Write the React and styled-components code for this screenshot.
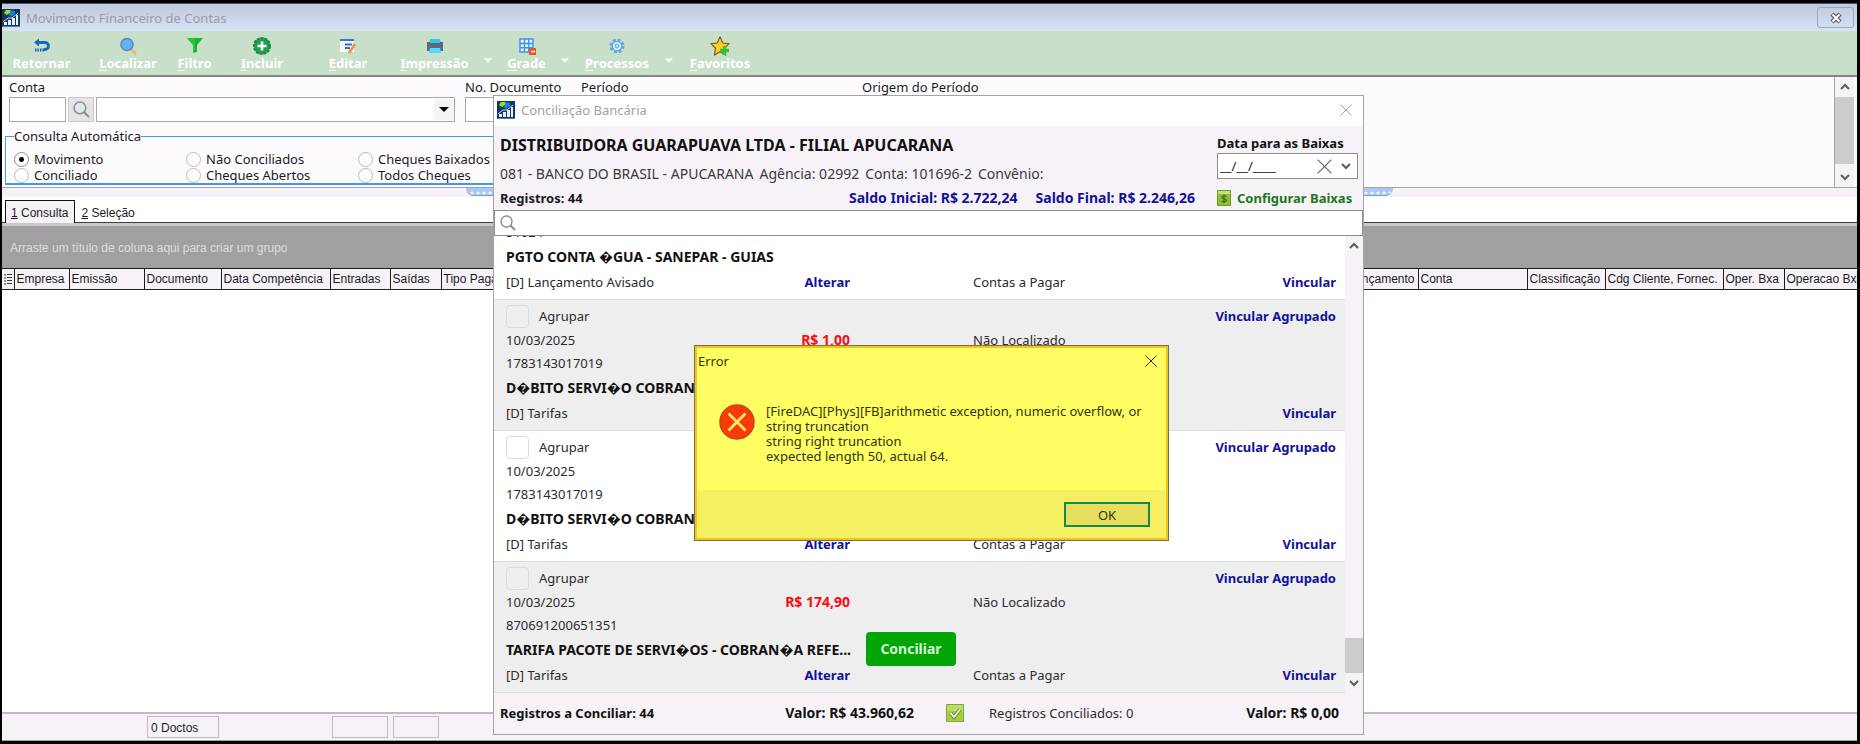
import React from "react";
import styled, { createGlobalStyle } from "styled-components";

const GlobalStyle = createGlobalStyle`
  *, *::before, *::after {
    box-sizing: border-box;
  }

  body {
    margin: 0;
    background: #000;
    color: #1c1a1e;
    font-family: "Noto Sans", "Open Sans", sans-serif;
    font-size: 13px;
    line-height: 16px;
  }

  button, input, select {
    font: inherit;
    color: inherit;
    margin: 0;
    padding: 0;
    border-radius: 0;
  }

  button {
    background: none;
    border: 0;
  }

  h1, h2, p {
    margin: 0;
    font-size: inherit;
    font-weight: inherit;
  }
`;

const Screen = styled.div`
  position: relative;
  display: flex;
  flex-direction: column;
  min-height: 100vh;
  border: solid #000;
  border-width: 3px 3px 3px 2px;
  background: #fff;
  overflow: hidden;
`;

const TitleBar = styled.header`
  display: flex;
  align-items: center;
  height: 28px;
  padding-right: 3px;
  background: linear-gradient(#c0cbdc, #c8d4e5 45%, #d6e4f7);
  border-top: 1px solid #3c5a8a;
  color: #9c9ca4;

  & h1 {
    flex: 1;
    margin-left: 6px;
  }
`;

const CaptionButton = styled.button`
  display: flex;
  align-items: center;
  justify-content: center;
  width: 37px;
  height: 21px;
  border: 1px solid #98a5bd;
  border-radius: 3px;
`;

const Toolbar = styled.nav`
  display: flex;
  height: 46px;
  background: #c8dfc9;
  border-bottom: 2px solid #828583;
`;

const ToolButton = styled.button`
  display: flex;
  flex-direction: column;
  align-items: center;
  width: ${(props) => props.$width}px;
  padding-top: 5px;
  color: #fff;
  font-weight: 700;
  line-height: 14px;
  white-space: nowrap;

  & u {
    text-underline-offset: 2px;
  }
`;

const ToolArrow = styled.button`
  display: flex;
  align-items: center;
  justify-content: center;
  width: 10px;
  padding-bottom: 12px;
  align-self: flex-end;
`;

const FilterPanel = styled.section`
  display: flex;
  height: 111px;
  padding-right: 3px;
  background: #fefbff;
  border-bottom: 1px solid #a5a3a6;
`;

const FilterBody = styled.div`
  flex: 1;
  min-width: 0;
  padding: 3px 3px 0;
`;

const FilterRow = styled.div`
  display: flex;
  padding-left: 4px;
`;

const Field = styled.div`
  display: flex;
  flex-direction: column;
  gap: 3px;
  width: ${(props) => props.$width}px;

  & label {
    line-height: 14px;
    white-space: nowrap;
  }
`;

const FieldLine = styled.div`
  display: flex;
  gap: 2px;
  height: 25px;
  padding-right: 10px;
`;

const TextBox = styled.input`
  width: ${(props) => props.$width}px;
  height: 25px;
  padding: 0 4px;
  border: 1px solid #a9a8ab;
  background: #fff;
`;

const LookupButton = styled.button`
  display: flex;
  align-items: center;
  justify-content: center;
  width: 26px;
  height: 25px;
  background: #e6e3e7;
  border: 1px solid #cbc9cc;
`;

const SelectBox = styled.div`
  display: flex;
  align-items: center;
  flex: 1;
  background: #fff;
  border: 1px solid #a9a8ab;

  & select {
    flex: 1;
    height: 23px;
    padding: 0 4px;
    border: 0;
    background: transparent;
    appearance: none;
  }

  & span {
    display: flex;
    align-items: center;
    justify-content: center;
    width: 20px;
    height: 21px;
    background: #f6f3f7;
  }
`;

const QueryGroup = styled.fieldset`
  display: grid;
  grid-template-columns: repeat(3, 172px);
  grid-auto-rows: 16px;
  width: 640px;
  margin: 7px 0 0;
  padding: 8px 0 0 8px;
  border: 1px solid #3d9bea;
  border-bottom-width: 2px;

  & legend {
    line-height: 14px;
    padding: 0;
  }
`;

const RadioLabel = styled.label`
  display: flex;
  align-items: center;
  gap: 5px;

  & input {
    appearance: none;
    width: 15px;
    height: 15px;
    border: 1px solid #b9b7ba;
    border-radius: 50%;
    background: #fff;
  }

  & input:checked {
    border-color: #8e8c8f;
    background: radial-gradient(circle, #000 0 2px, #fff 3px);
  }
`;

const Scrollbar = styled.div`
  display: flex;
  flex-direction: column;
  align-items: center;
  width: ${(props) => props.$width}px;
  background: #f6f2f7;
  border-left: ${(props) => (props.$edge ? "1px solid #a5a3a6" : "0")};

  & button {
    display: flex;
    align-items: center;
    justify-content: center;
    width: 100%;
    height: 20px;
  }
`;

const Track = styled.div`
  display: flex;
  flex: 1;
  align-items: ${(props) => props.$thumbAt};
  width: 100%;
`;

const Thumb = styled.div`
  width: 100%;
  height: ${(props) => props.$size}px;
  background: #cdcbce;
`;

const Splitter = styled.div`
  display: flex;
  justify-content: center;
  height: 9px;
  background: #f6f2f7;
`;

const Grip = styled.button`
  width: 50%;
  height: 8px;
  background: radial-gradient(circle at 2px 5px, #eef6ff 1px, transparent 2px) 4px 0 / 6px 8px repeat-x,
    #a9c9f2;
  border-bottom: 1px solid #7f9cc4;
  border-radius: 0 0 8px 8px;
`;

const gridFont = `font-family: "Liberation Sans", Arial, sans-serif; font-size: 12px;`;

const Tabs = styled.div`
  display: flex;
  align-items: flex-end;
  height: 29px;
  padding-left: 3px;
  border-bottom: 3px solid #c9c7ca;
  box-shadow: inset 0 -1px 0 #3e3c40;
`;

const Tab = styled.button`
  height: 23px;
  padding: 1px 6px 0 5px;
  ${gridFont}
  border: solid ${(props) => (props.$active ? "#111" : "transparent")};
  border-width: 1px 1px 0;
  background: ${(props) => (props.$active ? "#f6f2f7" : "transparent")};
`;

const GroupBar = styled.p`
  height: 42px;
  padding: 14px 8px 0;
  background: #a29fa2;
  color: #dedcdf;
  ${gridFont}
`;

const Grid = styled.table`
  width: 100%;
  table-layout: fixed;
  border-collapse: collapse;
  ${gridFont}

  & th {
    height: 21px;
    padding: 0 2px;
    overflow: hidden;
    background: #f6f2f7;
    border: solid #1c1a1e;
    border-width: 1px 1px 1px 0;
    font-weight: 400;
    text-align: left;
    white-space: nowrap;
  }

  & th:last-child {
    border-right: 0;
  }

  & svg {
    display: block;
  }
`;

const Column = styled.col`
  width: ${(props) => (props.$width ? `${props.$width}px` : "auto")};
`;

const GridArea = styled.main`
  flex: 1;
`;

const StatusBar = styled.footer`
  display: flex;
  align-items: center;
  height: 29px;
  padding-left: 145px;
  background: #f6f2f7;
  border-top: 2px solid #bdbbbe;
  border-bottom: 1px solid #a5a3a6;
`;

const StatusCell = styled.div`
  width: ${(props) => props.$width}px;
  height: 22px;
  margin-right: ${(props) => props.$after}px;
  padding: 3px 3px 0;
  border: 1px solid #bdbbbe;
  ${gridFont}
`;

const Overlay = styled.div`
  position: absolute;
  inset: 0;
  display: flex;
  justify-content: center;
  align-items: flex-start;
  padding: ${(props) => props.$pad};
`;

const Dialog = styled.section`
  width: 871px;
  background: #f6f2f7;
  border: 1px solid #a5a3a6;
`;

const DialogTitle = styled.div`
  display: flex;
  align-items: center;
  gap: 6px;
  height: 30px;
  padding: 0 11px 2px 3px;
  background: #fff;
  color: #a3a1a4;

  & h2 {
    flex: 1;
  }

  & button {
    display: flex;
  }
`;

const DialogHeader = styled.div`
  display: flex;
  gap: 22px;
  height: 84px;
  padding: 9px 5px 0 6px;
`;

const Account = styled.div`
  flex: 1;
  white-space: nowrap;

  & h2 {
    color: #111;
    font-size: 16px;
    font-weight: 700;
    line-height: 20px;
  }

  & p {
    display: flex;
    gap: 6px;
    margin-top: 9px;
    color: #3b393d;
    font-size: 14px;
    line-height: 20px;
  }
`;

const Balances = styled.div`
  display: flex;
  gap: 18px;
  margin-top: 4px;
  line-height: 20px;

  & strong:first-child {
    flex: 1;
  }
`;

const Balance = styled.strong`
  color: #12129a;
  font-size: 14px;
`;

const Writeoff = styled.div`
  display: flex;
  flex-direction: column;
  width: 141px;

  & label {
    color: #111;
    font-weight: 700;
  }
`;

const DateBox = styled.div`
  display: flex;
  align-items: center;
  gap: 9px;
  height: 26px;
  margin-top: 2px;
  padding: 0 6px 0 2px;
  background: #fff;
  border: 1px solid #8e8c8f;

  & input {
    flex: 1;
    min-width: 0;
    border: 0;
  }

  & button {
    display: flex;
  }
`;

const ConfigLink = styled.a`
  display: flex;
  align-items: center;
  gap: 6px;
  margin-top: 9px;
  color: #1a7a1a;
  font-weight: 700;
  line-height: 20px;
  text-decoration: none;
  white-space: nowrap;
`;

const SearchBox = styled.label`
  display: flex;
  align-items: center;
  gap: 6px;
  height: 26px;
  padding: 0 5px;
  background: #fff;
  border: 1px solid #8e8c8f;

  & input {
    flex: 1;
    border: 0;
    outline: 0;
  }
`;

const ListFrame = styled.div`
  display: flex;
  height: 457px;
`;

/* kept at the end of its scroll, so the first entry is cut at the top */
const List = styled.ul`
  display: flex;
  flex: 1;
  flex-direction: column;
  justify-content: flex-end;
  margin: 0;
  padding: 0;
  overflow: hidden;
  list-style: none;
`;

const Entry = styled.li`
  display: grid;
  flex: none;
  grid-template-columns: 254px 90px 16px 90px 17px 1fr auto;
  grid-template-rows: 24px 23px 24px 25px 25px;
  align-items: center;
  height: 131px;
  padding: 4px 9px 0 12px;
  border-bottom: 1px solid #dedee2;
  background: ${(props) => (props.$shaded ? "#eeeeee" : "#fff")};
  color: #2c2a2e;
  white-space: nowrap;
`;

const GroupCheck = styled.label`
  display: flex;
  grid-column: 1;
  grid-row: 1;
  align-items: center;
  gap: 10px;

  & input {
    appearance: none;
    width: 23px;
    height: 23px;
    margin: 0;
    border: 1px solid #d9dae3;
    border-radius: 4px;
  }
`;

const Cell = styled.span`
  grid-column: ${(props) => props.$col};
  grid-row: ${(props) => props.$row};
`;

const Amount = styled(Cell)`
  color: #fb0b14;
  font-size: 14px;
  font-weight: 700;
  text-align: right;
`;

const Description = styled.strong`
  grid-column: 1 / 4;
  grid-row: 4;
  color: #111;
  font-size: 14px;
`;

const Action = styled.a`
  grid-column: ${(props) => props.$col};
  grid-row: ${(props) => props.$row};
  justify-self: end;
  color: #12129a;
  font-weight: 700;
  text-decoration: none;
`;

const ReconcileButton = styled.button`
  grid-column: 4;
  grid-row: 3 / 6;
  height: 34px;
  margin-bottom: 2px;
  background: #00a605;
  border-radius: 4px;
  color: #d8f5d8;
  font-size: 14px;
  font-weight: 700;
`;

const DialogFooter = styled.div`
  display: flex;
  align-items: center;
  height: 41px;
  padding: 2px 24px 3px 6px;
  color: #2c2a2e;

  & strong {
    color: #111;
  }
`;

const Pending = styled.strong`
  flex: 0 0 158px;
`;

const Total = styled.strong`
  width: ${(props) => props.$width}px;
  font-size: 14px;
  text-align: right;
`;

const DoneCount = styled.span`
  display: flex;
  flex: 1;
  align-items: center;
  gap: 25px;
  margin-left: 32px;
`;

const ErrorBox = styled.section`
  width: 475px;
  background: #ffff63;
  border: 1px solid #77704a;
  box-shadow: inset 0 0 0 2px #f3c51c;
  padding: 2px;
  color: #33330f;
`;

const ErrorTitle = styled.div`
  display: flex;
  align-items: center;
  justify-content: space-between;
  height: 26px;
  padding: 0 9px 0 1px;

  & button {
    display: flex;
  }
`;

const ErrorMessage = styled.div`
  display: flex;
  gap: 11px;
  height: 116px;
  padding: 30px 0 0 22px;

  & p {
    line-height: 15px;
    white-space: pre;
  }
`;

const ErrorActions = styled.div`
  display: flex;
  justify-content: flex-end;
  height: 48px;
  padding: 12px 16px 0 0;
  background: #f5ef62;

  & button {
    width: 86px;
    height: 25px;
    background: #e7de5e;
    border: 2px solid #118a55;
  }
`;

const AppIcon = () => (
  <svg width="18" height="18" viewBox="0 0 18 18" aria-hidden="true">
    <rect width="18" height="18" fill="#12395f" />
    <path d="M2 4l2-3h5L8 4 5 6z" fill="#9be020" />
    <path d="M8 1l5 1v3L9 8 7 6 8 4z" fill="#1a7fe0" />
    <path d="M2 16v-3h3v3zM6 16v-5h3v5zM10 16V9h3v7zM14 16V6h2v10z" fill="#eaf2fb" />
    <path d="M1 13l5-4 4 0 6-5" stroke="#c9dcf0" fill="none" />
    <path d="M0 17.500h18" stroke="#4d7fa8" />
  </svg>
);

const Cross = ({ size = 12, color = "#a9a7aa", width = 1 }) => (
  <svg width={size} height={size} viewBox="0 0 12 12" aria-hidden="true">
    <path d="M.5.5l11 11M11.500.5l-11 11" stroke={color} strokeWidth={width} />
  </svg>
);

const Chevron = ({ up }) => (
  <svg width="10" height="8" viewBox="0 0 10 8" aria-hidden="true">
    <path d={up ? "M1 6l4-4 4 4" : "M1 2l4 4 4-4"} stroke="#5c5a5d" strokeWidth="2" fill="none" />
  </svg>
);

const Lens = ({ size = 16, fill = "none" }) => (
  <svg width={size} height={size} viewBox="0 0 16 16" aria-hidden="true">
    <path d="M10.500 10.500l4.500 4.500" stroke="#8f8d90" strokeWidth="2" />
    <circle cx="6.500" cy="6.500" r="5.500" fill={fill} stroke="#8f8d90" strokeWidth="1.400" />
  </svg>
);

const RowsIcon = () => (
  <svg width="8" height="12" viewBox="0 0 8 12" aria-hidden="true">
    <path d="M0 2h2M0 5h2M0 8h2M0 11h2M3 1.500h5M3 4.500h5M3 7.500h5M3 10.500h5" stroke="#3e3c40" />
  </svg>
);

const ToolIcon = ({ children }) => (
  <svg width="20" height="20" viewBox="0 0 20 20" aria-hidden="true">
    {children}
  </svg>
);

const icons = {
  back: (
    <ToolIcon>
      <path d="M4 6.500h9a3 3 0 010 7h-1" stroke="#1767c4" strokeWidth="2.800" fill="none" />
      <path d="M7 2.500v8L2 6.500z" fill="#1767c4" />
      <path d="M3 14h9" stroke="#1767c4" strokeWidth="3" strokeDasharray="1.500 1" />
    </ToolIcon>
  ),
  find: (
    <ToolIcon>
      <path d="M13 13l5 5" stroke="#e5ba6a" strokeWidth="2.500" />
      <circle cx="9" cy="8.500" r="6" fill="#62b2fb" stroke="#5d86b4" strokeWidth="1.500" />
    </ToolIcon>
  ),
  filter: (
    <ToolIcon>
      <path d="M2 2h16l-6 7v7l-4 1V9z" fill="#17b42c" />
      <path d="M2 2h8v15l-2-1V9z" fill="#35d83f" opacity=".5" />
    </ToolIcon>
  ),
  add: (
    <ToolIcon>
      <circle cx="10" cy="10" r="8" fill="#20a04d" stroke="#128a45" strokeWidth="2" strokeDasharray="3 1" />
      <path d="M10 5.500v9M5.500 10h9" stroke="#fff" strokeWidth="2.600" />
    </ToolIcon>
  ),
  edit: (
    <ToolIcon>
      <path d="M2 3h14v13H2z" fill="#f4f8ff" />
      <path d="M2 3h14v2H2z" fill="#3d74d0" />
      <path d="M7 8.500h7M7 12h5" stroke="#2a6be0" strokeWidth="1.800" />
      <path d="M11 17l6-9" stroke="#f0933a" strokeWidth="2.800" />
    </ToolIcon>
  ),
  print: (
    <ToolIcon>
      <path d="M5 3h10v5H5z" fill="#33c6ef" />
      <path d="M2 6h2l1-1v2h10V5l1 1h2v9H2z" fill="#5b6b77" />
      <path d="M5 12h10l1 5H4z" fill="#4fdcff" />
    </ToolIcon>
  ),
  grid: (
    <ToolIcon>
      <path d="M3 3h13v13H3z" fill="#e4f1ff" />
      <path d="M3 3h13v13H3zM3 7.500h13M3 11.700h13M7.500 3v13M11.700 3v13" stroke="#3b94e8" strokeWidth="1.400" fill="none" />
      <path d="M12 12h7v7h-7z" fill="#e8542a" />
      <path d="M14 15.500h4" stroke="#fff" strokeWidth="1.500" />
    </ToolIcon>
  ),
  gear: (
    <ToolIcon>
      <circle cx="10" cy="10" r="6" fill="none" stroke="#5aa6e8" strokeWidth="3" strokeDasharray="2.700 2.010" />
      <circle cx="10" cy="10" r="4.700" fill="#e6f3fd" stroke="#5aa6e8" strokeWidth="1.200" />
      <circle cx="10" cy="10" r="2" fill="#c8dfc9" stroke="#5aa6e8" />
    </ToolIcon>
  ),
  star: (
    <ToolIcon>
      <path d="M10 1l2.800 6 6.200.700-4.600 4.500L15.500 19 10 15.700 4.500 19l1.100-6.800L1 7.700 7.200 7z" fill="#ffd02a" stroke="#8a5a10" strokeWidth="1.200" />
      <path d="M14.500 10v9M10 14.500h9" stroke="#37c12f" strokeWidth="3.400" />
    </ToolIcon>
  ),
};

const TriangleDown = ({ color, width = 10 }) => (
  <svg width={width} height="5" viewBox="0 0 10 5" aria-hidden="true">
    <path d="M0 0h10L5 5z" fill={color} />
  </svg>
);

const MoneyIcon = () => (
  <svg width="14" height="16" viewBox="0 0 14 16" aria-hidden="true">
    <path d="M.5.5h13v15H.5z" fill="#8fbf35" stroke="#6d9a2a" />
    <path d="M1 1h12v3H1z" fill="#c5df7d" />
    <path d="M9.500 6.500C8 5.300 4.700 5.500 4.700 7.300c0 2 4.800 1 4.800 3 0 1.800-3.500 2-5 .700M7 4.500v8.500" stroke="#3f6d12" strokeWidth="1.200" fill="none" />
  </svg>
);

const CheckIcon = () => (
  <svg width="18" height="18" viewBox="0 0 18 18" aria-hidden="true">
    <path d="M.5.5h17v17H.5z" fill="#a5cf3f" stroke="#7fa63a" />
    <path d="M1 1h16v6H1z" fill="#bcdc68" />
    <path d="M4.500 9l3.500 4 6-7.500" stroke="#5f7d38" strokeWidth="3.600" fill="none" />
    <path d="M4.500 9l3.500 4 6-7.500" stroke="#edf3e2" strokeWidth="2" fill="none" />
  </svg>
);

const ErrorIcon = () => (
  <svg width="36" height="36" viewBox="0 0 36 36" aria-hidden="true">
    <circle cx="18" cy="18" r="17" fill="#fa3a08" stroke="#c9470c" strokeWidth="1.500" />
    <path d="M9.500 9.500l17 17M26.500 9.500l-17 17" stroke="#ffee66" strokeWidth="2.600" />
  </svg>
);

const tools = [
  { label: "Retornar", icon: "back", width: 79, plain: true },
  { label: "Localizar", icon: "find", width: 94 },
  { label: "Filtro", icon: "filter", width: 39 },
  { label: "Incluir", icon: "add", width: 96 },
  { label: "Editar", icon: "edit", width: 76 },
  { label: "Impressão", icon: "print", width: 97, menu: true },
  { label: "Grade", icon: "grid", width: 67, menu: true },
  { label: "Processos", icon: "gear", width: 94, menu: true },
  { label: "Favoritos", icon: "star", width: 92 },
];

const queries = [
  "Movimento",
  "Não Conciliados",
  "Cheques Baixados",
  "Conciliado",
  "Cheques Abertos",
  "Todos Cheques",
];

const columns = [
  { title: "", width: 12 },
  { title: "Empresa", width: 55 },
  { title: "Emissão", width: 75 },
  { title: "Documento", width: 77 },
  { title: "Data Competência", width: 109 },
  { title: "Entradas", width: 60 },
  { title: "Saídas", width: 51 },
  { title: "Tipo Pagamento" },
  { title: "Lançamento", width: 72 },
  { title: "Conta", width: 109 },
  { title: "Classificação", width: 78 },
  { title: "Cdg Cliente, Fornec.", width: 118 },
  { title: "Oper. Bxa", width: 61 },
  { title: "Operacao Bxa", width: 73 },
];

const entries = [
  {
    number: "51024",
    description: "PGTO CONTA \uFFFDGUA - SANEPAR - GUIAS",
    kind: "[D] Lançamento Avisado",
  },
  {
    date: "10/03/2025",
    number: "1783143017019",
    amount: "R$ 1,00",
    description: "D\uFFFDBITO SERVI\uFFFDO COBRAN\uFFFDA",
    kind: "[D] Tarifas",
  },
  {
    date: "10/03/2025",
    number: "1783143017019",
    description: "D\uFFFDBITO SERVI\uFFFDO COBRAN\uFFFDA",
    kind: "[D] Tarifas",
  },
  {
    date: "10/03/2025",
    number: "870691200651351",
    amount: "R$ 174,90",
    description: "TARIFA PACOTE DE SERVI\uFFFDOS - COBRAN\uFFFDA REFE...",
    kind: "[D] Tarifas",
    selected: true,
  },
];

const errorText = `[FireDAC][Phys][FB]arithmetic exception, numeric overflow, or
string truncation
string right truncation
expected length 50, actual 64.`;

const MainToolbar = () => (
  <Toolbar>
    {tools.map((tool) => (
      <React.Fragment key={tool.label}>
        <ToolButton $width={tool.width}>
          {icons[tool.icon]}
          <span>
            {tool.plain ? tool.label[0] : <u>{tool.label[0]}</u>}
            {tool.label.slice(1)}
          </span>
        </ToolButton>
        {tool.menu && (
          <ToolArrow aria-label={`Opções de ${tool.label}`}>
            <TriangleDown color="#fff" width={8} />
          </ToolArrow>
        )}
      </React.Fragment>
    ))}
  </Toolbar>
);

const Filters = () => (
  <FilterPanel>
    <FilterBody>
      <FilterRow>
        <Field $width={456}>
          <label htmlFor="conta">Conta</label>
          <FieldLine>
            <TextBox id="conta" $width={57} />
            <LookupButton aria-label="Pesquisar conta">
              <Lens size={17} fill="#dcebed" />
            </LookupButton>
            <SelectBox>
              <select aria-label="Nome da conta" />
              <span>
                <TriangleDown color="#000" />
              </span>
            </SelectBox>
          </FieldLine>
        </Field>
        <Field $width={116}>
          <label htmlFor="documento">No. Documento</label>
          <TextBox id="documento" $width={100} />
        </Field>
        <Field $width={281}>
          <label htmlFor="periodo">Período</label>
          <TextBox id="periodo" $width={120} />
        </Field>
        <Field $width={200}>
          <label htmlFor="origem">Origem do Período</label>
          <TextBox id="origem" $width={160} />
        </Field>
      </FilterRow>
      <QueryGroup>
        <legend>Consulta Automática</legend>
        {queries.map((query, index) => (
          <RadioLabel key={query}>
            <input type="radio" name="consulta" defaultChecked={index === 0} />
            {query}
          </RadioLabel>
        ))}
      </QueryGroup>
    </FilterBody>
    <Scrollbar $width={20} $edge>
      <button aria-label="Subir">
        <Chevron up />
      </button>
      <Track $thumbAt="flex-start">
        <Thumb $size={67} />
      </Track>
      <button aria-label="Descer">
        <Chevron />
      </button>
    </Scrollbar>
  </FilterPanel>
);

const BankEntry = ({ entry, shaded }) => (
  <Entry $shaded={shaded}>
    <GroupCheck>
      <input type="checkbox" />
      Agrupar
    </GroupCheck>
    <Action href="#agrupado" $col="6 / 8" $row={1}>
      Vincular Agrupado
    </Action>
    <Cell $col={1} $row={2}>
      {entry.date}
    </Cell>
    <Amount $col={2} $row={2}>
      {entry.amount}
    </Amount>
    <Cell $col="6 / 8" $row={2}>
      Não Localizado
    </Cell>
    <Cell $col={1} $row={3}>
      {entry.number}
    </Cell>
    <Description>{entry.description}</Description>
    {entry.selected && <ReconcileButton>Conciliar</ReconcileButton>}
    <Cell $col={1} $row={5}>
      {entry.kind}
    </Cell>
    <Action href="#alterar" $col={2} $row={5}>
      Alterar
    </Action>
    <Cell $col={6} $row={5}>
      Contas a Pagar
    </Cell>
    <Action href="#vincular" $col={7} $row={5}>
      Vincular
    </Action>
  </Entry>
);

const Reconciliation = () => (
  <Dialog role="dialog" aria-label="Conciliação Bancária">
    <DialogTitle>
      <AppIcon />
      <h2>Conciliação Bancária</h2>
      <button aria-label="Fechar">
        <Cross />
      </button>
    </DialogTitle>
    <DialogHeader>
      <Account>
        <h2>DISTRIBUIDORA GUARAPUAVA LTDA - FILIAL APUCARANA</h2>
        <p>
          <span>081 - BANCO DO BRASIL - APUCARANA</span>
          <span>Agência: 02992</span>
          <span>Conta: 101696-2</span>
          <span>Convênio:</span>
        </p>
        <Balances>
          <strong>Registros: 44</strong>
          <Balance>Saldo Inicial: R$ 2.722,24</Balance>
          <Balance>Saldo Final: R$ 2.246,26</Balance>
        </Balances>
      </Account>
      <Writeoff>
        <label htmlFor="data-baixas">Data para as Baixas</label>
        <DateBox>
          <input id="data-baixas" defaultValue="__/__/____" />
          <button aria-label="Limpar data">
            <Cross size={15} color="#6b696c" />
          </button>
          <button aria-label="Abrir calendário">
            <Chevron />
          </button>
        </DateBox>
        <ConfigLink href="#baixas">
          <MoneyIcon />
          Configurar Baixas
        </ConfigLink>
      </Writeoff>
    </DialogHeader>
    <SearchBox>
      <Lens />
      <input type="text" aria-label="Pesquisar lançamentos" />
    </SearchBox>
    <ListFrame>
      <List>
        {entries.map((entry, index) => (
          <BankEntry key={index} entry={entry} shaded={index % 2 === 1} />
        ))}
      </List>
      <Scrollbar $width={18}>
        <button aria-label="Subir">
          <Chevron up />
        </button>
        <Track $thumbAt="flex-end">
          <Thumb $size={35} />
        </Track>
        <button aria-label="Descer">
          <Chevron />
        </button>
      </Scrollbar>
    </ListFrame>
    <DialogFooter>
      <Pending>Registros a Conciliar: 44</Pending>
      <Total $width={256}>Valor: R$ 43.960,62</Total>
      <DoneCount>
        <CheckIcon />
        Registros Conciliados: 0
      </DoneCount>
      <Total $width={100}>Valor: R$ 0,00</Total>
    </DialogFooter>
  </Dialog>
);

const ErrorDialog = () => (
  <ErrorBox role="alertdialog" aria-label="Error">
    <ErrorTitle>
      <span>Error</span>
      <button aria-label="Fechar">
        <Cross color="#33330f" />
      </button>
    </ErrorTitle>
    <ErrorMessage>
      <ErrorIcon />
      <p>{errorText}</p>
    </ErrorMessage>
    <ErrorActions>
      <button>OK</button>
    </ErrorActions>
  </ErrorBox>
);

export default function App() {
  return (
    <Screen>
      <GlobalStyle />
      <TitleBar>
        <AppIcon />
        <h1>Movimento Financeiro de Contas</h1>
        <CaptionButton aria-label="Fechar">
          <svg width="14" height="12" viewBox="0 0 14 12" aria-hidden="true">
            <path d="M3 2l8 8M11 2l-8 8" stroke="#565b69" strokeWidth="4.500" />
            <path d="M3.500 2.500l7 7M10.500 2.500l-7 7" stroke="#fff" strokeWidth="2" />
          </svg>
        </CaptionButton>
      </TitleBar>
      <MainToolbar />
      <Filters />
      <Splitter>
        <Grip aria-label="Recolher filtros" />
      </Splitter>
      <Tabs>
        <Tab $active>
          <u>1</u> Consulta
        </Tab>
        <Tab>
          <u>2</u> Seleção
        </Tab>
      </Tabs>
      <GroupBar>Arraste um título de coluna aqui para criar um grupo</GroupBar>
      <GridArea>
        <Grid>
          <colgroup>
            {columns.map((column) => (
              <Column key={column.title} $width={column.width} />
            ))}
          </colgroup>
          <thead>
            <tr>
              {columns.map((column) => (
                <th key={column.title}>{column.title || <RowsIcon />}</th>
              ))}
            </tr>
          </thead>
        </Grid>
      </GridArea>
      <StatusBar>
        <StatusCell $width={72} $after={113}>
          0 Doctos
        </StatusCell>
        <StatusCell $width={56} $after={5} />
        <StatusCell $width={46} $after={0} />
      </StatusBar>
      <Overlay $pad="92px 2px 0 0">
        <Reconciliation />
      </Overlay>
      <Overlay $pad="342px 0 0 4px">
        <ErrorDialog />
      </Overlay>
    </Screen>
  );
}
